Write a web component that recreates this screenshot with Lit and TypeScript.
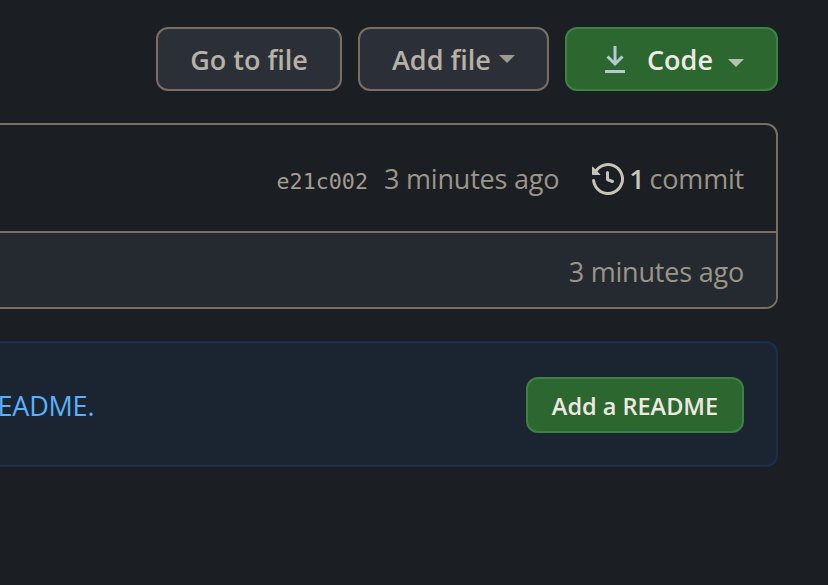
import { LitElement, html, css } from 'lit';
import { customElement } from 'lit/decorators.js';

@customElement('app-root')
export class AppRoot extends LitElement {
  static styles = css`
    :host {
      display: block;
      width: 828px;
      height: 585px;
      overflow: hidden;
      background: #1b1e23;
      font-family: 'Open Sans', 'Noto Sans', sans-serif;
      font-size: 27px;
      letter-spacing: -0.2px;
      color: #9c9587;
    }
    .page {
      display: flex;
      flex-direction: column;
      padding: 27px 50px 0 0;
    }
    .actions {
      display: flex;
      justify-content: flex-end;
      gap: 16px;
    }
    .btn {
      display: flex;
      align-items: center;
      box-sizing: border-box;
      height: 64px;
      border: 2px solid #786f62;
      border-radius: 12px;
      background: #2b3038;
      color: #b8b1a5;
      font-weight: 600;
      letter-spacing: 0;
      white-space: nowrap;
    }
    .goto { width: 186px; justify-content: center; }
    .add { width: 191px; padding-left: 32px; }
    .code {
      width: 213px;
      padding-left: 38px;
      background: #2d6730;
      border-color: #3f8142;
      color: #eeeae2;
    }
    .caret {
      width: 0;
      height: 0;
      border-left: 8px solid transparent;
      border-right: 8px solid transparent;
      border-top: 8px solid #9f998d;
    }
    .add .caret { margin: 0 0 0 8px; }
    .code .caret { margin: 8px 0 0 15px; border-top-color: #b7c2b4; }
    .dl { width: 20px; height: 28px; margin-right: 22px; flex: none; color: #b4c8d2; }
    .card {
      margin: 32px 0 0 -40px;
      border: 2px solid #786f62;
      border-radius: 12px;
      overflow: hidden;
    }
    .row {
      display: flex;
      align-items: center;
      justify-content: flex-end;
      padding-right: 32px;
    }
    .top { height: 106px; }
    .bottom {
      box-sizing: border-box;
      height: 76px;
      padding-top: 2px;
      border-top: 2px solid #786f62;
      background: #252930;
    }
    .sha {
      font-family: 'DejaVu Sans Mono', monospace;
      font-size: 21.7px;
      letter-spacing: 0;
      color: #a39c8f;
      margin-right: 16px;
      padding-top: 6px;
    }
    .hist { width: 32px; height: 32px; margin: 2px 5px 0 33px; color: #c9c4b9; flex: none; }
    .count { color: #c9c4b9; font-weight: 600; margin-right: 5px; }
    .banner {
      display: flex;
      align-items: center;
      justify-content: space-between;
      box-sizing: border-box;
      height: 126px;
      margin: 32px 0 0 -40px;
      padding: 0 32px 0 19px;
      border: 2px solid #1a2f50;
      border-radius: 12px;
      background: #1b2532;
    }
    .link { color: #5cb0ff; margin-top: 2px; }
    .readme {
      display: flex;
      align-items: center;
      justify-content: center;
      box-sizing: border-box;
      width: 218px;
      height: 56px;
      margin-top: 2px;
      padding-top: 1px;
      border: 2px solid #3f8142;
      border-radius: 12px;
      background: #2d6730;
      color: #eeeae2;
      font-size: 23.5px;
      font-weight: 600;
      letter-spacing: 0;
    }
  `;

  render() {
    return html`
      <div class="page">
        <div class="actions">
          <div class="btn goto">Go to file</div>
          <div class="btn add">Add file<span class="caret"></span></div>
          <div class="btn code">
            <svg class="dl" viewBox="0 0 20 28" fill="none" stroke="currentColor" stroke-width="3">
              <path d="M10 1v18M2.5 11.5l7.5 7.5 7.5-7.5M0 26.5h20" />
            </svg>
            Code<span class="caret"></span>
          </div>
        </div>
        <div class="card">
          <div class="row top">
            <span class="sha">e21c002</span>
            <span>3 minutes ago</span>
            <svg class="hist" viewBox="0 0 16 16" fill="currentColor">
              <path
                d="M1.643 3.143.427 1.927A.25.25 0 0 0 0 2.104V5.75c0 .138.112.25.25.25h3.646a.25.25 0 0 0 .177-.427L2.715 4.215a6.5 6.5 0 1 1-1.18 4.458.75.75 0 1 0-1.493.154 8.001 8.001 0 1 0 1.6-5.684ZM7.75 4a.75.75 0 0 1 .75.75v2.992l2.028.812a.75.75 0 0 1-.557 1.392l-2.5-1A.751.751 0 0 1 7 8.25v-3.5A.75.75 0 0 1 7.75 4Z"
              />
            </svg>
            <span class="count">1</span>
            <span>commit</span>
          </div>
          <div class="row bottom"><span>3 minutes ago</span></div>
        </div>
        <div class="banner">
          <span class="link">README.</span>
          <div class="readme">Add a README</div>
        </div>
      </div>
    `;
  }
}
